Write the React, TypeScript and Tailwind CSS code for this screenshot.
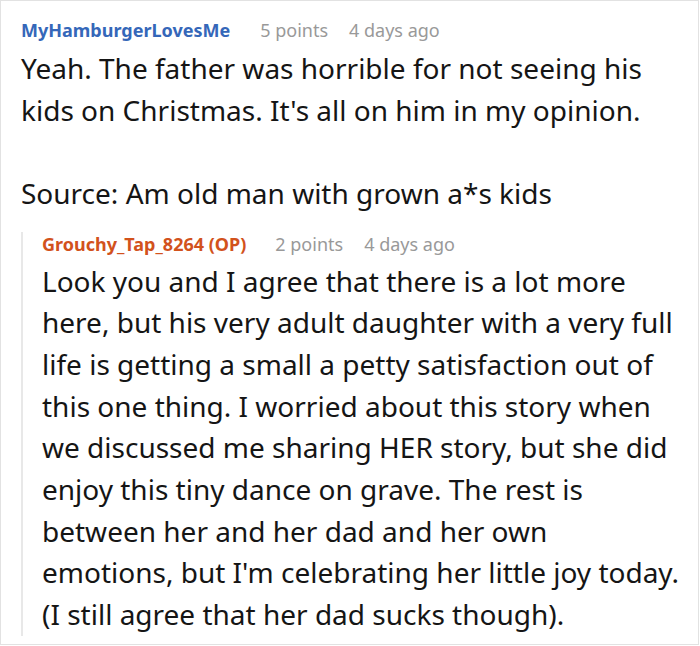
import React from "react";

function Meta({ name, color, points, gapName }: { name: string; color: string; points: string; gapName: string }) {
  return (
    <div className="flex items-baseline text-[18px] leading-[24px] whitespace-nowrap">
      <span className={`font-bold ${color}`}>{name}</span>
      <span className={`${gapName} text-[#999999]`}>{points}</span>
      <span className="ml-[21px] text-[#999999]">4 days ago</span>
    </div>
  );
}

export default function App() {
  return (
    <div className="w-[699px] h-[645px] border border-[#e2e2e2] bg-white pl-[20px] pr-[10px] pt-[17px] font-['Noto_Sans',sans-serif] overflow-hidden">
      <Meta name="MyHamburgerLovesMe" color="text-[#3567b9]" points="5 points" gapName="ml-[30px]" />
      <div className="mt-[6px] text-[28px] leading-[41.67px] text-[#151515] whitespace-pre-line">
        {"Yeah. The father was horrible for not seeing his kids on Christmas. It's all on him in my opinion.\n\nSource: Am old man with grown a*s kids"}
      </div>
      <div className="mt-[17px] pt-[6px] border-l-2 border-[#e8e8e8] pl-[19px]">
        <div className="-mt-[6px]">
          <Meta name="Grouchy_Tap_8264 (OP)" color="text-[#d2521c]" points="2 points" gapName="ml-[29px]" />
        </div>
        <div className="mt-[5px] text-[28px] leading-[41.67px] text-[#151515]">
          Look you and I agree that there is a lot more here, but his very adult daughter with a very full life is getting a small a petty satisfaction out of this one thing. I worried about this story when we discussed me sharing HER story, but she did enjoy this tiny dance on grave. The rest is between her and her dad and her own
          <br />
          emotions, but I'm celebrating her little joy today. (I still agree that her dad sucks though).
        </div>
      </div>
    </div>
  );
}
